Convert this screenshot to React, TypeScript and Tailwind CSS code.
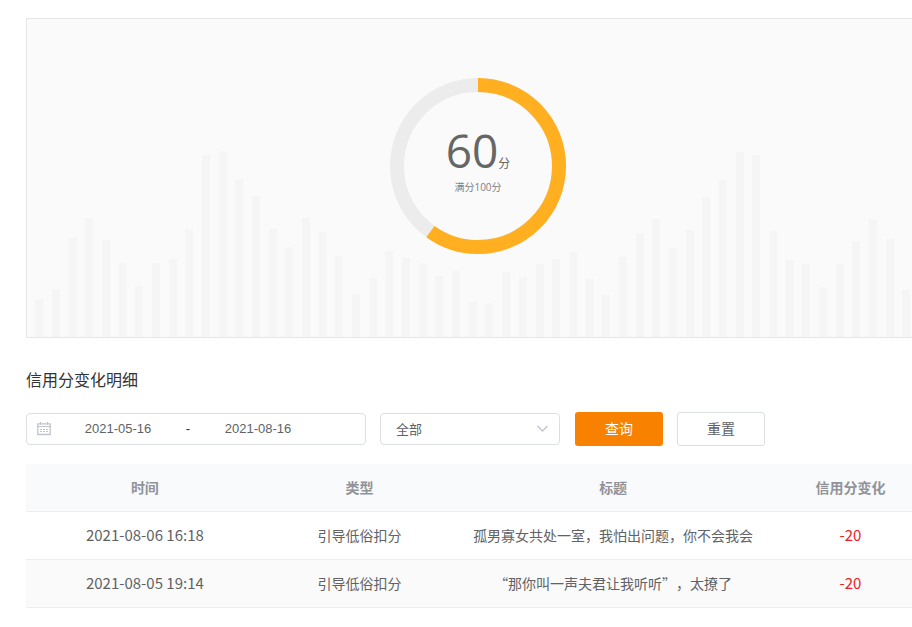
import { useState, FormEvent } from "react"


interface recordProps {
  id: number
  time: string
  type: string
  title: string
  change: number
}

const records: recordProps[] = [
  { id: 1, time: "2021-08-06 16:18", type: "引导低俗扣分", title: "孤男寡女共处一室，我怕出问题，你不会我会", change: -20 },
  { id: 2, time: "2021-08-05 19:14", type: "引导低俗扣分", title: "“那你叫一声夫君让我听听”，太撩了", change: -20 },
]

// heights of the bars behind the score
const bars = [
  38, 48, 99, 119, 97, 74, 51, 74, 78, 108, 182, 186, 158, 141, 108, 90, 119, 105,
  81, 43, 59, 86, 79, 74, 61, 66, 35, 34, 65, 60, 73, 78, 85, 58, 42, 80, 104, 118,
  89, 107, 140, 157, 185, 182, 106, 77, 73, 50, 73, 96, 118, 98, 47, 38,
]

function BarsBackground() {
  return (
    <svg
      className="absolute inset-0 w-full h-full"
      viewBox="0 0 902 318"
      preserveAspectRatio="xMidYMax slice"
      aria-hidden="true">
      {bars.map((height, index) => (
        <rect
          key={index}
          x={Math.round(8.4 + index * 16.67)}
          y={318 - height}
          width={8}
          height={height}
          fill="#f5f5f5"
        />
      ))}
    </svg>
  )
}

function ScoreRing({ score }: { score: number }) {
  return (
    <div className="relative w-44 h-44 flex flex-col items-center pt-[42px] font-['Open_Sans','Noto_Sans_CJK_SC',sans-serif]">
      <svg className="absolute inset-0" viewBox="0 0 176 176" fill="none" aria-hidden="true">
        <circle cx="88" cy="88" r="81" stroke="#ececec" strokeWidth="14" />
        <circle
          cx="88"
          cy="88"
          r="81"
          stroke="#ffaf20"
          strokeWidth="14"
          pathLength="100"
          strokeDasharray={`${score} 100`}
          transform="rotate(-90 88 88)"
        />
      </svg>
      <p className="relative flex items-baseline text-[#666]">
        <span className="text-[46px] leading-[60px]">{score}</span>
        <span className="text-xs">分</span>
      </p>
      <p className="relative text-[10px] leading-[14px] text-[#808080]">满分100分</p>
    </div>
  )
}

function CalendarIcon() {
  return (
    <svg className="w-[14px] h-[14px] shrink-0" viewBox="0 0 14 14" fill="none" stroke="#c0c4cc" aria-hidden="true">
      <path strokeWidth="1.3" d="M.8 1.8h12.4v10.7H.8z" />
      <path d="M.5 4.5h13M3.5 0v3M10.5 0v3" />
      <path d="M3 7.5h2M6 7.5h2M9 7.5h2M3 9.5h2M6 9.5h2M9 9.5h2" />
    </svg>
  )
}

export default function App() {

  const [start, setStart] = useState("2021-05-16")
  const [end, setEnd] = useState("2021-08-16")
  const [type, setType] = useState("all")

  function handleSubmit(e: FormEvent) {
    e.preventDefault()
  }

  function handleReset() {
    setStart("2021-05-16")
    setEnd("2021-08-16")
    setType("all")
  }

  return (
    <div className="w-full overflow-hidden bg-white font-['Noto_Sans_CJK_SC',sans-serif]">
      <main className="ml-[26px] -mr-[18px] pt-[18px] pb-5">
        <section className="relative h-80 border border-[#e6e6e6] bg-[#fafafa] flex justify-center pt-[59px]">
          <BarsBackground />
          <ScoreRing score={60} />
        </section>

        <h1 className="mt-[29px] text-base leading-6 text-[#333]">信用分变化明细</h1>

        <form className="mt-[21px] flex items-center gap-[15px]" onSubmit={handleSubmit}>
          <div className="flex items-center gap-[14px]">
            <div className="w-[340px] h-8 flex items-center gap-1 pl-[10px] border border-[#dcdfe6] rounded text-[13px] text-[#606266] font-['Liberation_Sans',sans-serif]">
              <CalendarIcon />
              <input
                className="w-[126px] text-center outline-none"
                type="text"
                aria-label="开始日期"
                value={start}
                onChange={(e) => setStart(e.target.value)}
              />
              <span className="w-[6px] text-center text-[#303133]">-</span>
              <input
                className="w-[126px] text-center outline-none"
                type="text"
                aria-label="结束日期"
                value={end}
                onChange={(e) => setEnd(e.target.value)}
              />
            </div>
            <div className="relative w-[180px]">
              <select
                className="block w-full h-8 px-[15px] appearance-none bg-white border border-[#dcdfe6] rounded text-[13px] text-[#606266]"
                aria-label="类型"
                value={type}
                onChange={(e) => setType(e.target.value)}>
                <option value="all">全部</option>
                <option value="low">引导低俗扣分</option>
              </select>
              <svg
                className="absolute right-3 top-3 w-[11px] h-2 pointer-events-none"
                viewBox="0 0 11 8"
                fill="none"
                stroke="#c0c4cc"
                strokeWidth="1.3"
                aria-hidden="true">
                <path d="M.5 1l5 5 5-5" />
              </svg>
            </div>
          </div>
          <div className="flex gap-[14px]">
            <button
              type="submit"
              className="w-[88px] h-[34px] pb-0.5 cursor-pointer bg-[#f88200] rounded-[3px] text-sm text-white">
              查询
            </button>
            <button
              type="button"
              onClick={handleReset}
              className="w-[88px] h-[34px] pb-0.5 cursor-pointer bg-white border border-[#dcdfe6] rounded-[3px] text-sm text-[#606266]">
              重置
            </button>
          </div>
        </form>

        <table className="mt-[18px] w-full table-fixed border-separate border-spacing-0 text-center text-sm text-[#606266] [&_th]:border-b [&_td]:border-b [&_th]:border-[#ebeef5] [&_td]:border-[#ebeef5] [&_th]:pb-0.5 [&_td]:pb-0.5">
          <colgroup>
            <col className="w-[26.3%]" />
            <col className="w-[21.2%]" />
            <col className="w-[34.9%]" />
            <col />
          </colgroup>
          <thead className="bg-[#f9fafc] text-[#909399]">
            <tr className="h-12">
              <th className="font-bold">时间</th>
              <th className="font-bold">类型</th>
              <th className="font-bold">标题</th>
              <th className="font-bold">信用分变化</th>
            </tr>
          </thead>
          <tbody>
            {records.map((record) => (
              <tr key={record.id} className="h-12 even:bg-[#fafafa]">
                <td className="text-[15px]">{record.time}</td>
                <td>{record.type}</td>
                <td className="[text-spacing-trim:space-all]">{record.title}</td>
                <td className="text-[15px] text-[#f02020]">{record.change}</td>
              </tr>
            ))}
          </tbody>
        </table>
      </main>
    </div>
  )
}
